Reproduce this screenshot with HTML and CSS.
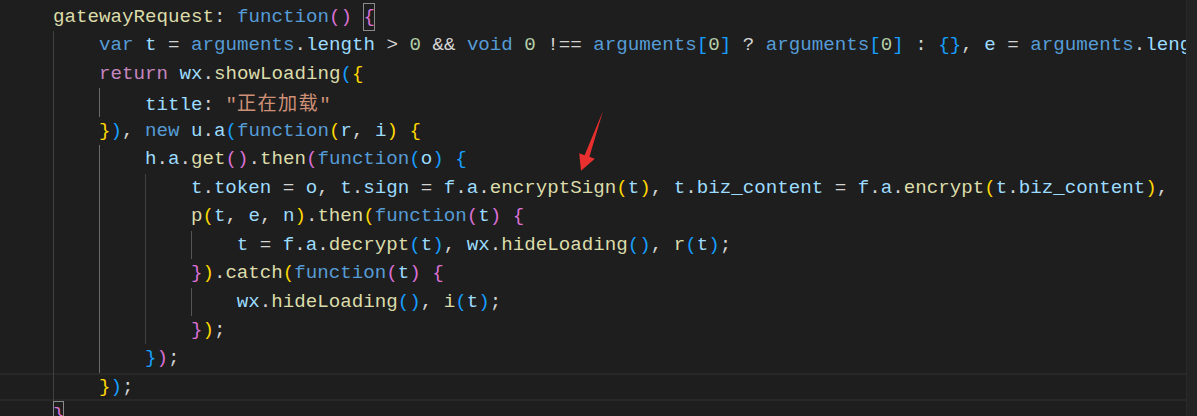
FILE: index.html
```html
<!DOCTYPE html>
<html>
<head>
<meta charset="utf-8">
<link rel="stylesheet" href="styles.css">
</head>
<body>
<div class="editor">
  <div class="code">
    <div class="ln"><span class="pad"></span><span class="c"><span class="f">gatewayRequest</span>: <span class="k">function</span><span class="b2">()</span> <span class="b2 match">{</span></span></div>
    <div class="ln"><span class="pad"></span><span class="g"></span><span class="c"><span class="k">var</span> <span class="v">t</span> = <span class="k">arguments</span>.<span class="v">length</span> &gt; <span class="n">0</span> &amp;&amp; <span class="k">void</span> <span class="n">0</span> !== <span class="k">arguments</span><span class="b3">[</span><span class="n">0</span><span class="b3">]</span> ? <span class="k">arguments</span><span class="b3">[</span><span class="n">0</span><span class="b3">]</span> : <span class="b3">{}</span>, <span class="v">e</span> = <span class="k">arguments</span>.<span class="v">length</span></span></div>
    <div class="ln"><span class="pad"></span><span class="g"></span><span class="c"><span class="r">return</span> <span class="v">wx</span>.<span class="f">showLoading</span><span class="b3">(</span><span class="b1">{</span></span></div>
    <div class="ln"><span class="pad"></span><span class="g"></span><span class="g act"></span><span class="c"><span class="v">title</span>: <span class="s">"<span class="cjk">正在加载</span>"</span></span></div>
    <div class="ln"><span class="pad"></span><span class="g"></span><span class="c"><span class="b1">}</span><span class="b3">)</span>, <span class="k">new</span> <span class="v">u</span>.<span class="v">a</span><span class="b3">(</span><span class="k">function</span><span class="b1">(</span><span class="v">r</span>, <span class="v">i</span><span class="b1">)</span> <span class="b1">{</span></span></div>
    <div class="ln"><span class="pad"></span><span class="g"></span><span class="g act"></span><span class="c"><span class="v">h</span>.<span class="v">a</span>.<span class="f">get</span><span class="b2">()</span>.<span class="f">then</span><span class="b2">(</span><span class="k">function</span><span class="b3">(</span><span class="v">o</span><span class="b3">)</span> <span class="b3">{</span></span></div>
    <div class="ln"><span class="pad"></span><span class="g"></span><span class="g act"></span><span class="g"></span><span class="c"><span class="v">t</span>.<span class="v">token</span> = <span class="v">o</span>, <span class="v">t</span>.<span class="v">sign</span> = <span class="v">f</span>.<span class="v">a</span>.<span class="f">encryptSign</span><span class="b1">(</span><span class="v">t</span><span class="b1">)</span>, <span class="v">t</span>.<span class="v">biz_content</span> = <span class="v">f</span>.<span class="v">a</span>.<span class="f">encrypt</span><span class="b1">(</span><span class="v">t</span>.<span class="v">biz_content</span><span class="b1">)</span>,</span></div>
    <div class="ln"><span class="pad"></span><span class="g"></span><span class="g act"></span><span class="g"></span><span class="c"><span class="f">p</span><span class="b1">(</span><span class="v">t</span>, <span class="v">e</span>, <span class="v">n</span><span class="b1">)</span>.<span class="f">then</span><span class="b1">(</span><span class="k">function</span><span class="b2">(</span><span class="v">t</span><span class="b2">)</span> <span class="b2">{</span></span></div>
    <div class="ln"><span class="pad"></span><span class="g"></span><span class="g act"></span><span class="g"></span><span class="g mid"></span><span class="c"><span class="v">t</span> = <span class="v">f</span>.<span class="v">a</span>.<span class="f">decrypt</span><span class="b3">(</span><span class="v">t</span><span class="b3">)</span>, <span class="v">wx</span>.<span class="f">hideLoading</span><span class="b3">()</span>, <span class="f">r</span><span class="b3">(</span><span class="v">t</span><span class="b3">)</span>;</span></div>
    <div class="ln"><span class="pad"></span><span class="g"></span><span class="g act"></span><span class="g"></span><span class="c"><span class="b2">}</span><span class="b1">)</span>.<span class="f">catch</span><span class="b1">(</span><span class="k">function</span><span class="b2">(</span><span class="v">t</span><span class="b2">)</span> <span class="b2">{</span></span></div>
    <div class="ln"><span class="pad"></span><span class="g"></span><span class="g act"></span><span class="g"></span><span class="g mid"></span><span class="c"><span class="v">wx</span>.<span class="f">hideLoading</span><span class="b3">()</span>, <span class="f">i</span><span class="b3">(</span><span class="v">t</span><span class="b3">)</span>;</span></div>
    <div class="ln"><span class="pad"></span><span class="g"></span><span class="g act"></span><span class="g"></span><span class="c"><span class="b2">}</span><span class="b1">)</span>;</span></div>
    <div class="ln"><span class="pad"></span><span class="g"></span><span class="g act"></span><span class="c"><span class="b3">}</span><span class="b2">)</span>;</span></div>
    <div class="ln cur"><span class="pad"></span><span class="g"></span><span class="c"><span class="b1">}</span><span class="b3">)</span>;</span></div>
    <div class="ln"><span class="pad"></span><span class="c"><span class="b2 match">}</span></span></div>
  </div>
  <div class="vscroll"></div>
  <svg class="arrow" width="1197" height="416" viewBox="0 0 1197 416">
    <polygon points="603,111 589.4,156.8 594.8,158.8 581,170.8 579.2,153.2 584.6,155.2" fill="#ea2f2f"/>
  </svg>
</div>
</body>
</html>
```

FILE: styles.css
```css
html, body {
  margin: 0;
  padding: 0;
  background: #1e1e1e;
  overflow: hidden;
}

.editor {
  position: relative;
  display: flex;
  width: 1197px;
  height: 416px;
  background: #1e1e1e;
}

.code {
  flex: 1;
  min-width: 0;
  overflow: hidden;
  padding-top: 3px;
  font-family: "Liberation Mono", "Noto Sans CJK SC", monospace;
  font-size: 19.17px;
  line-height: 28.46px;
  color: #d4d4d4;
}

.ln {
  display: flex;
  height: 28.46px;
  padding-left: 7px;
}

.ln.cur {
  box-shadow: inset 0 2px 0 #282828, inset 0 -2px 0 #282828;
}

.pad {
  flex: none;
  width: 4ch;
}

.g {
  flex: none;
  width: 4ch;
  background: linear-gradient(to right, #404040 0, #404040 1px, transparent 1px);
}

.g.act {
  background: linear-gradient(to right, #6a6a6a 0, #6a6a6a 1px, transparent 1px);
}

.g.mid {
  background: linear-gradient(to right, #555555 0, #555555 1px, transparent 1px);
}

.c {
  flex: none;
  white-space: pre;
}

.k { color: #569cd6; }
.v { color: #9cdcfe; }
.f { color: #dcdcaa; }
.r { color: #c586c0; }
.s { color: #ce9178; }
.n { color: #b5cea8; }
.b1 { color: #ffd700; }
.b2 { color: #da70d6; }
.b3 { color: #179fff; }

.cjk {
  font-family: "Noto Sans CJK SC", sans-serif;
  letter-spacing: 1.4px;
}

.match {
  display: inline-block;
  box-shadow: inset 0 0 0 1px #8a8a8a;
}

.vscroll {
  flex: none;
  width: 11px;
  box-sizing: border-box;
  background: #232323;
  border-left: 1px solid #2a2a2a;
}

.arrow {
  position: absolute;
  left: 0;
  top: 0;
  pointer-events: none;
}
```
